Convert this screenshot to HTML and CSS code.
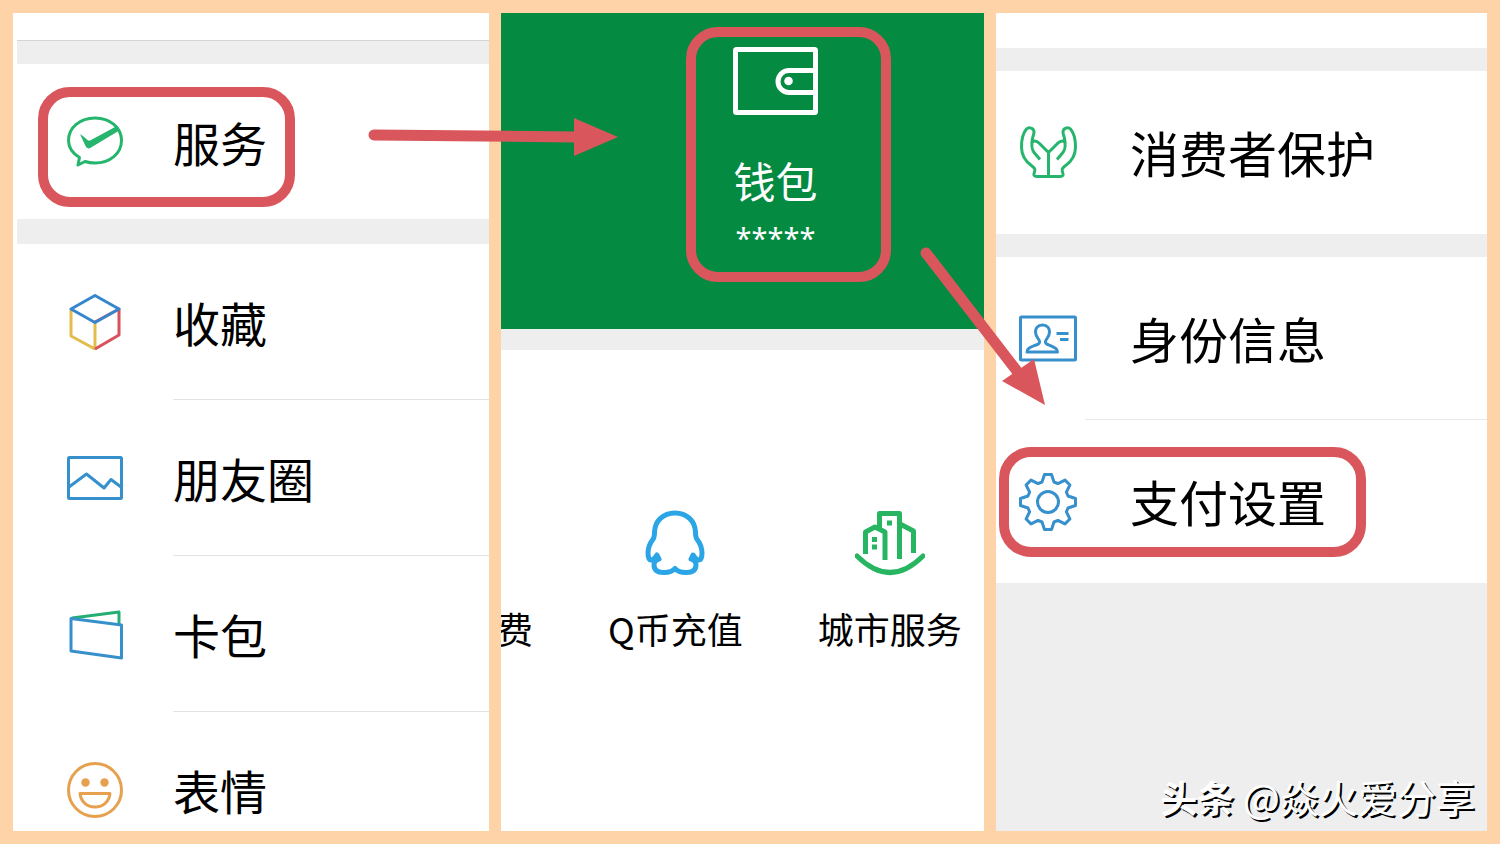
FILE: index.html
```html
<!DOCTYPE html>
<html lang="zh-CN">
  <head>
    <meta charset="utf-8" />
    <title>支付设置</title>
    <link rel="stylesheet" href="styles.css">
  </head>
  <body>
    <div class="board">
      <div class="panel me">
        <div class="band top"></div>
        <a class="row marked" href="#">
          <svg class="icon green" viewBox="0 0 56 56">
            <path d="M12.5 43.5C5 39 1.5 33 1.5 26.5C1.5 13.500 13 4 28 4S54.500 13.500 54.500 26.500S43 49 28 49C24 49 21 48.500 18 47.500L11 51Z" />
            <path class="solid" d="M13 20Q16 22 20.500 26Q22 27 24 26L49 12.500L51.500 17L24 33.500Q20.500 36 18.500 32Z" />
          </svg>
          <span>服务</span>
        </a>
        <div class="band"></div>
        <a class="row" href="#">
          <svg class="icon" viewBox="0 0 56 56">
            <path stroke="#e2bd4c" d="M4 16V42L28 55V29" />
            <path stroke="#d9515d" d="M28 55L52 41V15L28 28" />
            <path stroke="#3586cc" d="M4 15L28 1.500L52 15L28 28.500Z" />
          </svg>
          <span class="line">收藏</span>
        </a>
        <a class="row" href="#">
          <svg class="icon blue" viewBox="0 0 56 56">
            <rect x="1.500" y="7.500" width="53" height="41" rx="1" />
            <path d="M2 37L19.500 24L37 38L44 29.500L54 37M36 37H39" />
          </svg>
          <span class="line">朋友圈</span>
        </a>
        <a class="row" href="#">
          <svg class="icon blue" viewBox="0 0 56 56">
            <path stroke="#25ae74" d="M5 12L52 6V18" />
            <path d="M4 12.500L54.500 19V52L4 45Z" />
          </svg>
          <span class="line">卡包</span>
        </a>
        <a class="row" href="#">
          <svg class="icon orange" viewBox="0 0 56 56">
            <circle cx="28" cy="28" r="26.500" />
            <circle class="solid" cx="18.500" cy="20.500" r="4.200" />
            <circle class="solid" cx="37.500" cy="20.500" r="4.200" />
            <path d="M13 31.500H43C42 40 36 45 28 45S14 40 13 31.500Z" />
          </svg>
          <span class="line">表情</span>
        </a>
      </div>

      <div class="panel service">
        <div class="head">
          <a class="wallet marked" href="#">
            <svg viewBox="0 0 85 68">
              <rect x="2.500" y="2.500" width="80" height="63" rx="1" />
              <path d="M82 23.500H56a11 11 0 0 0 0 22H82" />
              <circle cx="55.500" cy="34" r="4.300" />
            </svg>
            <span>钱包</span>
            <span class="stars">*****</span>
          </a>
        </div>
        <div class="band"></div>
        <div class="apps">
          <a class="app" href="#">费</a>
          <a class="app" href="#">
            <svg class="qq" viewBox="0 0 60 66">
              <path d="M30 3C18 3 10 11 9.500 22C9.500 26 9.500 28 7.500 30C4.500 34 3 38 3 43C3 47 4 50 6 50C8 50 10 48 12 45L14 49C10 50 9 53 9 55C9 61 14 62.500 19 62.500C24 62.500 28 61 30 58.500C32 61 36 62.500 41 62.500C46 62.500 51 61 51 55C51 53 50 50 46 49L48 45C50 48 52 50 54 50C56 50 57 47 57 43C57 38 55.500 34 52.500 30C50.500 28 50.500 26 50.500 22C50 11 42 3 30 3Z" />
            </svg>
            Q币充值
          </a>
          <a class="app" href="#">
            <svg class="city" viewBox="0 0 70 66">
              <path d="M10.500 44V22L20 17L30 22V50M24.500 18V3.500H44.500V49M45 14L58.500 21V43" />
              <path d="M2 46Q35 79 68 46" stroke-linecap="round" />
              <path class="window" d="M32 10.500h5v5h-5zM17 27h5v5h-5zM17 34.500h5v5h-5z" />
            </svg>
            城市服务
          </a>
        </div>
      </div>

      <div class="panel pay">
        <div class="band"></div>
        <a class="row" href="#">
          <svg class="icon green" viewBox="0 0 58 58">
            <path d="M29.500 28.500V52.500H17.500C14.500 52.500 14.500 51 15.500 48C16.500 45 15.500 44 13 42C7 38 2.500 32 2.500 23C2.500 15 4 9 7.500 5C10 2.500 15 4 15 8C15 11 13 14 13 18C15 16.500 18 17 20 19L29.500 28.500L39 19C41 17 44 16.500 46 18C46 14 44 11 44 8C44 4 49 2.500 51.500 5C55 9 56.500 15 56.500 23C56.500 32 52 38 46 42C43.500 44 42.500 45 43.500 48C44.500 51 44.500 52.500 41.500 52.500H29.500" />
            <path d="M13 18C12.500 24 13 26 15.500 29L21 35.500M46 18C46.500 24 46 26 43.500 29L38 35.500" />
          </svg>
          <span>消费者保护</span>
        </a>
        <div class="band"></div>
        <a class="row divided" href="#">
          <svg class="icon blue" viewBox="0 0 58 58">
            <rect x="1.500" y="7" width="55" height="43" rx="1" />
            <path d="M23.500 15C18.500 15 16.500 18.500 16.500 22C16.500 26 18 27.500 20 30C21.500 32.500 20 34 17 35C11 37.500 8 38.500 8 42H38.500C38.500 38.500 35.500 37.500 30 35C27 34 25.500 32.500 27 30C29 27.500 30.500 26 30.500 22C30.500 18.500 28.500 15 23.500 15Z" />
            <path d="M37.500 23.500H49.500M41 29.500H49.500" />
          </svg>
          <span>身份信息</span>
        </a>
        <a class="row marked" href="#">
          <svg class="icon blue" viewBox="0 0 58 58">
            <path d="M23 9L25.500 1.500H32.500L35 9L38.900 10.600L46 7.100L50.900 12L47.400 19.100L49 23L56.500 25.500V32.500L49 35L47.400 38.900L50.900 46L46 50.900L38.900 47.400L35 49L32.500 56.500H25.500L23 49L19.100 47.400L12 50.900L7.100 46L10.600 38.900L9 35L1.500 32.500V25.500L9 23L10.600 19.100L7.100 12L12 7.100L19.100 10.600Z" />
            <circle cx="29" cy="29" r="10.500" />
          </svg>
          <span>支付设置</span>
        </a>
        <div class="rest"></div>
        <div class="watermark"><b>头条</b> @焱火爱分享</div>
      </div>

      <svg class="arrows" viewBox="0 0 1500 844">
        <path d="M374 135L576 137M926 253L1020 375" />
        <polygon points="574,118 618,137 574,156" />
        <polygon points="1002,381 1034,359 1045,405" />
      </svg>
    </div>
  </body>
</html>
```
FILE: styles.css
```css
html,
body {
  margin: 0;
  padding: 0;
}
body {
  font-family: "Noto Sans CJK SC", "Noto Sans", sans-serif;
  color: #000;
}
a {
  color: inherit;
  text-decoration: none;
}
svg {
  display: block;
  flex: none;
  fill: none;
  stroke-linejoin: round;
}
.board {
  position: relative;
  display: grid;
  grid-template-columns: 476fr 483fr 491fr;
  gap: 12px;
  height: 100vh;
  padding: 13px;
  box-sizing: border-box;
  background: #ffd3a8;
}
.panel {
  position: relative;
  display: flex;
  flex-direction: column;
  min-width: 0;
  min-height: 0;
  overflow: hidden;
  background: #fff;
}
.band {
  flex: none;
  height: 24px;
  background: #eee;
}

/* rows */
.row {
  position: relative;
  display: flex;
  flex: none;
  align-items: center;
  height: 156px;
}
.row span {
  flex: 1;
  height: 100%;
  box-sizing: border-box;
}
.icon {
  width: 56px;
  height: 56px;
  stroke-width: 3;
}
.green {
  stroke: #25b56c;
}
.blue {
  stroke: #3690cc;
}
.orange {
  stroke: #e6a14f;
}
.green .solid {
  fill: #25b56c;
  stroke: none;
}
.orange .solid {
  fill: #e6a14f;
  stroke: none;
}

/* red frame */
.marked::after {
  content: "";
  position: absolute;
  box-sizing: border-box;
  border: 10px solid #d9575c;
  border-radius: 32px;
}

.me {
  padding-top: 27px;
  box-sizing: border-box;
}
.me .band {
  height: 25px;
  margin-left: 4px;
}
.me .top {
  height: 24px;
  box-sizing: border-box;
  border-top: 1px solid #d4d4d4;
}
.me .row {
  gap: 50px;
  padding-left: 54px;
  font-size: 47px;
  line-height: 156px;
}
.me .marked {
  height: 155px;
}
.me .line {
  border-bottom: 1px solid #e2e2e2;
}
.me .marked::after {
  left: 25px;
  top: 23px;
  width: 257px;
  height: 120px;
}

.head {
  flex: none;
  height: 316px;
  padding: 34px 0 0 232px;
  box-sizing: border-box;
  background: #048a41;
}
.wallet {
  position: relative;
  display: flex;
  flex-direction: column;
  align-items: center;
  width: 85px;
  color: #fff;
  font-size: 42px;
  line-height: 60px;
}
.wallet svg {
  width: 85px;
  height: 68px;
  margin-bottom: 35px;
  stroke: #fff;
  stroke-width: 5;
}
.wallet circle {
  fill: #fff;
  stroke: none;
}
.wallet .stars {
  font-family: "Noto Sans", sans-serif;
  font-size: 29px;
  line-height: 56px;
}
.wallet::after {
  left: -47px;
  top: -20px;
  width: 205px;
  height: 255px;
}
.service .band {
  height: 21px;
}
.apps {
  display: flex;
  align-items: flex-end;
  gap: 75px;
  margin-left: -4px;
  padding-top: 160px;
  font-size: 36px;
  line-height: 50px;
  white-space: nowrap;
}
.app {
  display: flex;
  flex: none;
  flex-direction: column;
  align-items: center;
  gap: 27px;
}
.qq {
  width: 60px;
  height: 66px;
  stroke: #2ba5e5;
  stroke-width: 5;
}
.city {
  width: 70px;
  height: 66px;
  stroke: #27b562;
  stroke-width: 5;
}
.city .window {
  fill: #27b562;
  stroke: none;
}

.pay {
  padding-top: 35px;
  box-sizing: border-box;
}
.pay .band {
  height: 23px;
}
.pay .row {
  gap: 53px;
  height: 163px;
  padding-left: 23px;
  font-size: 49px;
  line-height: 161px;
}
.pay .icon {
  width: 58px;
  height: 58px;
}
.pay .divided::before {
  content: "";
  position: absolute;
  left: 89px;
  right: 0;
  bottom: 0;
  border-bottom: 1px solid #e8e8e8;
}
.pay .marked::after {
  left: 3px;
  top: 27px;
  width: 367px;
  height: 110px;
}
.rest {
  flex: 1;
  background: #eee;
}
.watermark {
  position: absolute;
  right: 12px;
  bottom: 6px;
  color: #fff;
  font-size: 39px;
  line-height: 56px;
  white-space: nowrap;
  text-shadow: 2px 2px 0 #000;
}
.watermark b {
  font-size: 37px;
}

.arrows {
  position: absolute;
  left: 0;
  top: 0;
  width: 100%;
  height: 100%;
  pointer-events: none;
}
.arrows path {
  stroke: #d9575c;
  stroke-width: 11;
  stroke-linecap: round;
}
.arrows polygon {
  fill: #d9575c;
}
```
